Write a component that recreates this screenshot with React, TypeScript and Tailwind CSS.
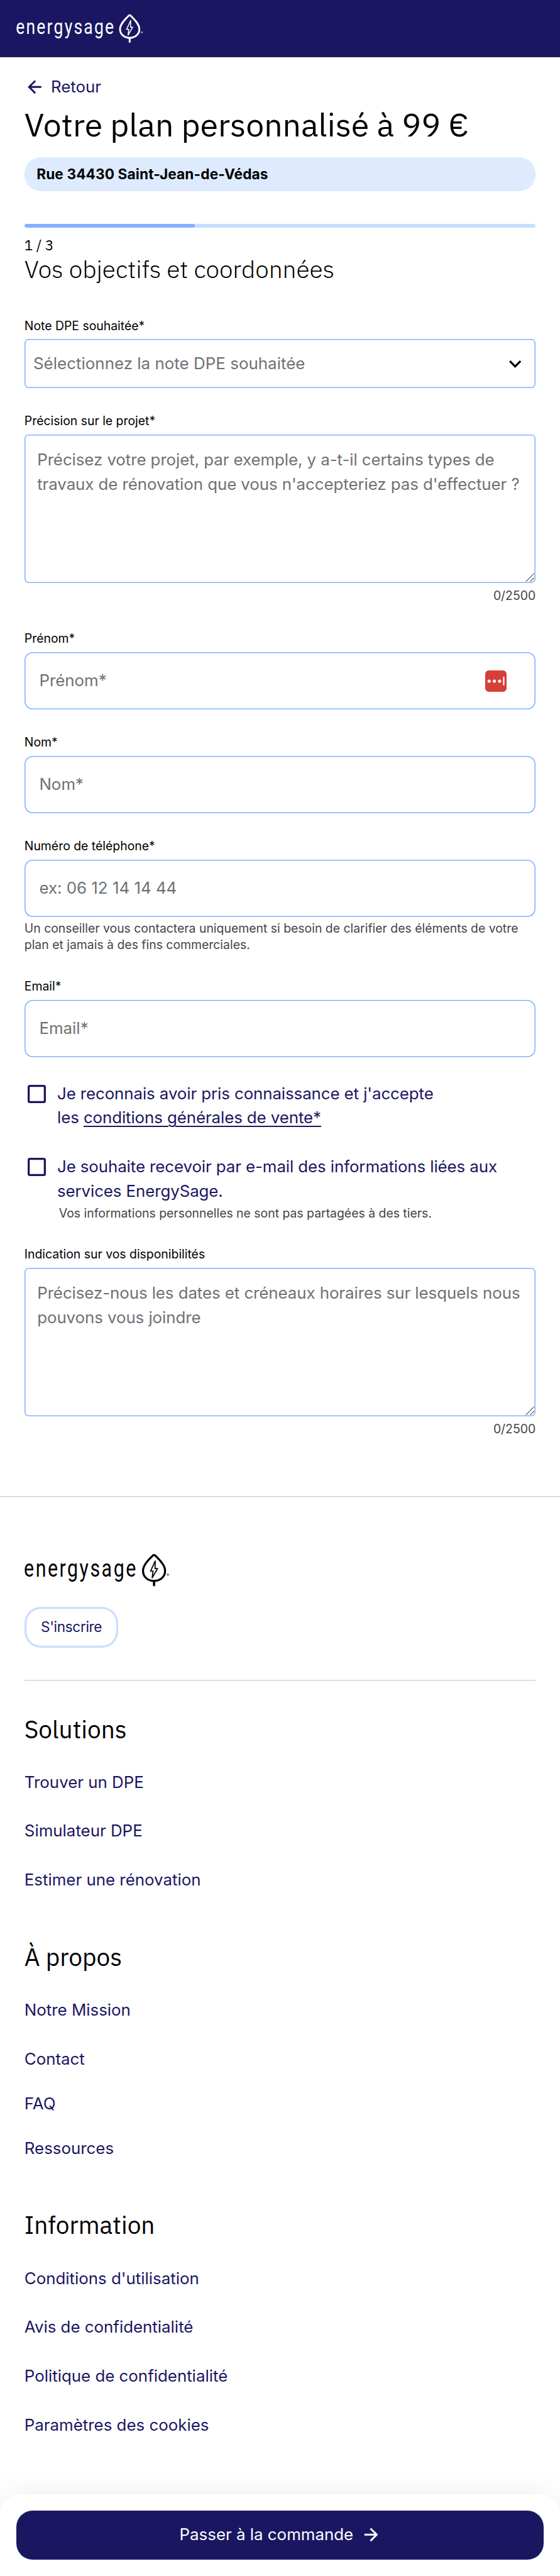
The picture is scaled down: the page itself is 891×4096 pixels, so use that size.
import type { ReactNode } from "react";

const NAVY = "#1b1662";

function Logo({ className, color }: { className: string; color: string }) {
  return (
    <svg viewBox="32 27 252 57" className={className} fill="none" role="img" aria-label="energysage">
      <g transform="translate(31 66.7) scale(0.8 1)">
        <text x="0" y="0" fontSize="41" fontFamily="Roboto, sans-serif" fill={color} textLength="241" lengthAdjust="spacing">
          energysage
        </text>
      </g>
      <path
        d="M253 30.6 Q255 29 257 30.6 C263 37 274 46.5 274 57 C274 67.5 265.5 74.3 255 74.3 C244.500 74.3 236 67.5 236 57 C236 46.5 247 37 253 30.600 Z"
        stroke={color}
        strokeWidth="3.500"
        strokeLinejoin="round"
      />
      <path d="M255 74.500 V82" stroke={color} strokeWidth="3.800" strokeLinecap="round" />
      <path d="M257 40 L249 57.500 H253.300 L251.800 69 L261 53.200 H256.700 Z" stroke={color} strokeWidth="1.900" strokeLinejoin="round" />
      <text x="276.800" y="66.800" fontSize="6" fontFamily="Inter, sans-serif" fill={color}>
        ®
      </text>
    </svg>
  );
}

function Label({ children, className }: { children: ReactNode; className: string }) {
  return <div className={`pt-[0.6px] text-[19.4px] leading-[25.3px] text-black ${className}`}>{children}</div>;
}

function Counter({ children }: { children: ReactNode }) {
  return <div className="mt-[8px] text-right text-[19.4px] leading-[25px] text-[#444]">{children}</div>;
}

function Input({ children, className, icon }: { children: ReactNode; className: string; icon?: ReactNode }) {
  return (
    <div
      className={`flex h-[90.6px] items-center justify-between rounded-[13px] pr-[46px] pl-[23.6px] text-[25.87px] leading-[38.8px] text-[#707174] shadow-[inset_0_0_0_1.6px_#84b2ff] ${className}`}
    >
      <span>{children}</span>
      {icon}
    </div>
  );
}

function TextArea({ children, className }: { children: ReactNode; className: string }) {
  return (
    <div
      className={`relative h-[236.1px] rounded-[6.5px] pt-[20.8px] pl-[20.4px] text-[25.87px] leading-[38.8px] tracking-[-0.07px] whitespace-nowrap text-[#707174] shadow-[inset_0_0_0_1.6px_#84b2ff] ${className}`}
    >
      {children}
      <svg viewBox="0 0 18 18" className="absolute right-[2px] bottom-[2px] size-[14.5px]" stroke="#555" strokeWidth="1.4" fill="none">
        <path d="M1 17 L17 1 M9.500 17 L17 9.500" />
      </svg>
    </div>
  );
}

function Checkbox({ children, className }: { children: ReactNode; className: string }) {
  return (
    <div className={`flex pl-[4.9px] text-[25.87px] leading-[38.8px] tracking-[-0.09px] text-[#1b1662] ${className}`}>
      <span className="mt-[5.5px] mr-[18.2px] size-[29.1px] shrink-0 rounded-[3.5px] shadow-[inset_0_0_0_3.3px_#1b1662]" />
      <span className="pt-[0.5px] whitespace-nowrap">{children}</span>
    </div>
  );
}

function FooterSection({ title, className, children }: { title: string; className: string; children: ReactNode }) {
  return (
    <section className={className}>
      <h3 className="-mt-[1.6px] mb-[1.6px] font-['IBM_Plex_Sans',Roboto,sans-serif] text-[38.8px] leading-[45.3px] text-black">
        {title}
      </h3>
      <div className="flex flex-col text-[25.87px] leading-[38.8px] text-[#1b1662]">{children}</div>
    </section>
  );
}

export default function App() {
  return (
    <div className="h-[4096px] w-full overflow-hidden bg-white font-['Inter',sans-serif] text-black">
      <header className="flex h-[90.55px] bg-[#1b1662] pt-[21.8px] pl-[25.9px]">
        <Logo className="h-[46.1px] w-[203.8px]" color="#ffffff" />
      </header>

      <main className="px-[38.8px]">
        <div className="mt-[28.6px] flex h-[38.8px] items-center pl-[5px] text-[25.87px] leading-[38.8px] text-[#1b1662]">
          <svg viewBox="0 0 28 28" className="mr-[14.5px] size-[22.6px]" fill="none" stroke={NAVY} strokeWidth="3.600">
            <path d="M27 14 H3 M15 1.800 L2.800 14 L15 26.200" />
          </svg>
          Retour
        </div>
        <h1 className="mt-[7.8px] h-[66.7px] font-['IBM_Plex_Sans',Roboto,sans-serif] text-[51.75px] leading-[64.7px] whitespace-nowrap">
          Votre plan personnalisé à 99 €
        </h1>
        <div className="mt-[17.4px] flex h-[54.2px] items-center rounded-[25.9px] bg-[#deebff] pl-[19.4px] text-[22.64px] font-bold tracking-[0.12px]">
          Rue 34430 Saint-Jean-de-Védas
        </div>
        <div className="mt-[51.7px] h-[6.5px] overflow-hidden rounded-[3.2px] bg-[#c7dfff]">
          <div className="h-full w-1/3 rounded-[3.2px] bg-[#84b2ff]" />
        </div>
        <div className="mt-[13px] h-[29.8px] font-['IBM_Plex_Sans',Roboto,sans-serif] text-[22.64px] leading-[29.1px]">1 / 3</div>
        <h2 className="mt-[0.4px] h-[46.900px] font-['IBM_Plex_Sans',Roboto,sans-serif] text-[38.8px] leading-[45.3px] font-light whitespace-nowrap">
          Vos objectifs et coordonnées
        </h2>

        <Label className="mt-[53.6px]">Note DPE souhaitée*</Label>
        <div className="mt-[7.4px] flex h-[77.6px] items-center justify-between rounded-[6.5px] pr-[22.6px] pl-[14.2px] text-[25.87px] leading-[38.8px] tracking-[0.04px] text-[#707174] shadow-[inset_0_0_0_1.6px_#84b2ff]">
          <span>Sélectionnez la note DPE souhaitée</span>
          <svg viewBox="0 0 24 15" className="mt-[2px] h-[12.1px] w-[19.4px]" fill="none" stroke="#000" strokeWidth="4">
            <path d="M1.500 1.500 L12 12 L22.500 1.500" />
          </svg>
        </div>

        <Label className="mt-[39.5px]">Précision sur le projet*</Label>
        <TextArea className="mt-[9.1px]">
          Précisez votre projet, par exemple, y a-t-il certains types de
          <br />
          travaux de rénovation que vous n'accepteriez pas d'effectuer ?
        </TextArea>
        <Counter>0/2500</Counter>

        <Label className="mt-[42.4px]">Prénom*</Label>
        <Input
          className="mt-[8.7px]"
          icon={
            <svg viewBox="0 0 42 42" className="size-[34px]">
              <rect width="42" height="42" rx="7" fill="#d63f39" />
              <circle cx="7.700" cy="21" r="3.200" fill="#fff" />
              <circle cx="18" cy="21" r="3.200" fill="#fff" />
              <circle cx="28.300" cy="21" r="3.200" fill="#fff" />
              <rect x="35" y="12.500" width="2.800" height="17" rx="1.400" fill="#fff" />
            </svg>
          }
        >
          Prénom*
        </Input>

        <Label className="mt-[39.6px]">Nom*</Label>
        <Input className="mt-[8.9px]">Nom*</Input>

        <Label className="mt-[39.6px]">Numéro de téléphone*</Label>
        <Input className="mt-[8.9px]">ex: 06 12 14 14 44</Input>
        <p className="mt-[6.5px] mb-[-0.6px] text-[19.4px] leading-[25.87px] whitespace-nowrap text-[#444]">
          Un conseiller vous contactera uniquement si besoin de clarifier des éléments de votre
          <br />
          plan et jamais à des fins commerciales.
        </p>

        <Label className="mt-[40.1px]">Email*</Label>
        <Input className="mt-[8.9px]">Email*</Input>

        <Checkbox className="mt-[38.2px]">
          Je reconnais avoir pris connaissance et j'accepte
          <br />
          les <span className="underline decoration-[2.4px] underline-offset-[4px]">conditions générales de vente*</span>
        </Checkbox>
        <Checkbox className="mt-[38.1px]">
          Je souhaite recevoir par e-mail des informations liées aux
          <br />
          services EnergySage.
        </Checkbox>
        <p className="mt-[3.6px] pl-[55px] text-[19.4px] leading-[25.9px] text-[#444]">
          Vos informations personnelles ne sont pas partagées à des tiers.
        </p>

        <Label className="mt-[38.9px]">Indication sur vos disponibilités</Label>
        <TextArea className="mt-[8.7px]">
          Précisez-nous les dates et créneaux horaires sur lesquels nous
          <br />
          pouvons vous joindre
        </TextArea>
        <Counter>0/2500</Counter>
      </main>

      <footer className="mt-[93.2px]">
        <div className="h-[1.6px] bg-[#c4c4c4]" />
        <div className="px-[38.8px]">
          <Logo className="mt-[89.6px] h-[52.7px] w-[232.9px]" color="#000000" />
          <div className="mt-[32.3px] flex h-[64.7px] w-[149.6px] items-center justify-center rounded-[25.9px] text-[22.64px] tracking-[-0.36px] text-[#1b1662] shadow-[inset_0_0_0_3.2px_#c7dfff]">
            S'inscrire
          </div>
          <div className="mt-[51.7px] h-[1.6px] bg-[#e0e0e0]" />
          <FooterSection title="Solutions" className="mt-[55.4px]">
            <a className="mt-[41.4px]">Trouver un DPE</a>
            <a className="mt-[38.8px]">Simulateur DPE</a>
            <a className="mt-[38.8px]">Estimer une rénovation</a>
          </FooterSection>
          <FooterSection title="À propos" className="mt-[81.9px]">
            <a className="mt-[41px]">Notre Mission</a>
            <a className="mt-[38.8px]">Contact</a>
            <a className="mt-[32.3px]">FAQ</a>
            <a className="mt-[32.3px]">Ressources</a>
          </FooterSection>
          <FooterSection title="Information" className="mt-[81.1px]">
            <a className="mt-[41.8px]">Conditions d'utilisation</a>
            <a className="mt-[38.8px]">Avis de confidentialité</a>
            <a className="mt-[38.8px]">Politique de confidentialité</a>
            <a className="mt-[38.8px]">Paramètres des cookies</a>
          </FooterSection>
        </div>
      </footer>

      <div className="mt-[90.4px] h-[140px] rounded-t-[32.3px] bg-white px-[25.9px] pt-[26.2px] shadow-[0_0_48px_rgba(0,0,0,0.08)]">
        <div className="flex h-[77.6px] items-center justify-center rounded-[25.9px] bg-[#1b1662] pr-[3.500px] text-[25.87px] text-white">
          Passer à la commande
          <svg viewBox="0 0 28 28" className="ml-[17.2px] size-[22.6px]" fill="none" stroke="#fff" strokeWidth="3.600">
            <path d="M1 14 H25 M13 1.800 L25.200 14 L13 26.200" />
          </svg>
        </div>
      </div>
    </div>
  );
}
